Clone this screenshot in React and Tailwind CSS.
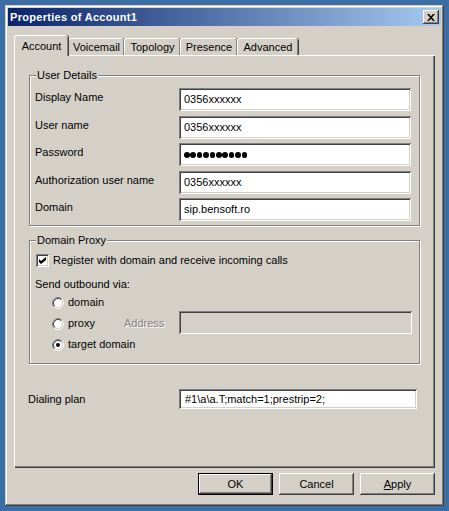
import React from 'react';

const raised =
  'shadow-[inset_-1px_-1px_0_#404040,inset_1px_1px_0_#ffffff,inset_-2px_-2px_0_#808080]';
const sunken =
  'shadow-[inset_1px_1px_0_#808080,inset_-1px_-1px_0_#ffffff,inset_2px_2px_0_#404040,inset_-2px_-2px_0_#d4d0c8]';

function TitleBar() {
  return (
    <div className="flex h-[18px] items-center justify-between bg-[linear-gradient(90deg,#0a246a,#a6caf0)] pl-[2px] pr-[2px]">
      <span className="text-[11px] font-bold tracking-[0.3px] text-white">Properties of Account1</span>
      <button className={`flex h-[14px] w-[16px] items-center justify-center bg-[#d4d0c8] ${raised}`}>
        <svg width="8" height="7" viewBox="0 0 8 7">
          <path d="M0 0h2l2 2.3L6 0h2L5 3.5 8 7H6L4 4.7 2 7H0l3-3.5z" fill="#000" />
        </svg>
      </button>
    </div>
  );
}

function Tab({ label, width, active }) {
  if (active) {
    return (
      <div
        className={`relative z-10 -mb-px flex h-[21px] items-center justify-center rounded-t-[3px] border-l border-t border-white bg-[#d4d0c8] shadow-[inset_-1px_0_0_#808080,1px_0_0_#404040] ${width}`}
      >
        {label}
      </div>
    );
  }
  return (
    <div
      className={`flex h-[17px] items-center justify-center rounded-t-[3px] border-l border-t border-white bg-[#d4d0c8] pt-px shadow-[inset_-1px_0_0_#808080,1px_0_0_#404040] ${width}`}
    >
      {label}
    </div>
  );
}

function GroupBox({ title, className, children }) {
  return (
    <div
      className={`relative border border-[#808080] shadow-[inset_1px_1px_0_#ffffff,1px_1px_0_#ffffff] ${className}`}
    >
      <span className="absolute -top-[7px] left-[6px] bg-[#d4d0c8] px-px">{title}</span>
      {children}
    </div>
  );
}

function Field({ label, top, children }) {
  return (
    <div className={`flex items-start ${top}`}>
      <span className="w-[144px] pt-[3px]">{label}</span>
      <div className={`flex h-[23px] w-[232px] items-center bg-white pl-[5px] ${sunken}`}>{children}</div>
    </div>
  );
}

function Radio({ checked }) {
  return (
    <svg width="12" height="12" viewBox="0 0 12 12">
      <circle cx="6" cy="6" r="4.2" fill="#ffffff" />
      <path d="M2.11 9.89A5.5 5.5 0 0 1 9.89 2.11" stroke="#808080" fill="none" />
      <path d="M9.89 2.11A5.5 5.5 0 0 1 2.11 9.89" stroke="#ffffff" fill="none" />
      <path d="M2.82 9.18A4.5 4.5 0 0 1 9.18 2.82" stroke="#404040" fill="none" />
      <path d="M9.18 2.82A4.5 4.5 0 0 1 2.82 9.18" stroke="#d4d0c8" fill="none" />
      {checked && <circle cx="6" cy="6" r="2" fill="#000" />}
    </svg>
  );
}

export default function App() {
  return (
    <div className="min-h-screen bg-[#3a6ea5] pl-[5px] pt-[5px] font-['Liberation_Sans',Arial,sans-serif] text-[11px] leading-[13px] text-black">
      <div className="flex h-[501px] w-[439px] flex-col bg-[#d4d0c8] p-[3px] shadow-[inset_-1px_-1px_0_#404040,inset_1px_1px_0_#d4d0c8,inset_-2px_-2px_0_#808080,inset_2px_2px_0_#ffffff]">
        <TitleBar />

        <div className="px-[6px] pt-[9px]">
          <div className="flex h-[20px] items-end">
            <Tab label="Account" width="w-[54px]" active />
            <Tab label="Voicemail" width="w-[56px]" />
            <Tab label="Topology" width="w-[56px]" />
            <Tab label="Presence" width="w-[57px]" />
            <Tab label="Advanced" width="w-[61px]" />
          </div>

          <div className="flex h-[413px] flex-col px-[15px] pt-[20px] shadow-[inset_1px_1px_0_#ffffff,inset_-1px_-1px_0_#404040,inset_-2px_-2px_0_#808080]">
            <GroupBox title="User Details" className="h-[151px] pl-[5px]">
              <Field label="Display Name" top="mt-[12px]">0356xxxxxx</Field>
              <Field label="User name" top="mt-[5px]">0356xxxxxx</Field>
              <Field label="Password" top="mt-[4px]">
                <div className="flex gap-[0.8px]">
                  {Array.from({ length: 10 }).map((_, i) => (
                    <span key={i} className="h-[6px] w-[5.6px] rounded-full bg-black" />
                  ))}
                </div>
              </Field>
              <Field label="Authorization user name" top="mt-[5px]">0356xxxxxx</Field>
              <Field label="Domain" top="mt-[4px]">sip.bensoft.ro</Field>
            </GroupBox>

            <GroupBox title="Domain Proxy" className="mt-[14px] h-[124px]">
              <div className="ml-[6px] mt-[13px] flex items-center gap-[4px]">
                <div className={`flex h-[13px] w-[13px] items-center justify-center bg-white ${sunken}`}>
                  <svg width="7" height="7" viewBox="0 0 7 7">
                    <path d="M0 2l2 2 5-4v3L2 7 0 5z" fill="#000" />
                  </svg>
                </div>
                <span>Register with domain and receive incoming calls</span>
              </div>
              <div className="ml-[5px] mt-[11px]">Send outbound via:</div>
              <div className="ml-[22px] mt-[1px] flex h-[21px] items-center gap-[4px]">
                <Radio />
                <span>domain</span>
              </div>
              <div className="ml-[22px] flex h-[21px] items-center">
                <div className="flex w-[72px] items-center gap-[4px]">
                  <Radio />
                  <span>proxy</span>
                </div>
                <span className="w-[55px] text-[#808080] [text-shadow:1px_1px_0_#ffffff]">Address</span>
                <div className={`-mt-[3px] h-[23px] w-[233px] bg-[#d4d0c8] ${sunken}`} />
              </div>
              <div className="ml-[22px] flex h-[21px] items-center gap-[4px]">
                <Radio checked />
                <span>target domain</span>
              </div>
            </GroupBox>

            <div className="mt-[25px] flex items-center">
              <span className="-ml-px w-[151px]">Dialing plan</span>
              <div className={`flex h-[20px] w-[238px] items-center bg-white pl-[6px] ${sunken}`}>
                {'#1\\a\\a.T;match=1;prestrip=2;'}
              </div>
            </div>
          </div>
        </div>

        <div className="mt-[5px] flex justify-end gap-[6px] pr-[6px]">
          <button className="h-[22px] w-[75px] border border-black bg-[#d4d0c8] shadow-[inset_-1px_-1px_0_#404040,inset_1px_1px_0_#ffffff,inset_-2px_-2px_0_#808080]">
            OK
          </button>
          <button className={`h-[22px] w-[75px] bg-[#d4d0c8] ${raised}`}>Cancel</button>
          <button className={`h-[22px] w-[75px] bg-[#d4d0c8] ${raised}`}>
            <span className="underline">A</span>pply
          </button>
        </div>
      </div>
    </div>
  );
}
